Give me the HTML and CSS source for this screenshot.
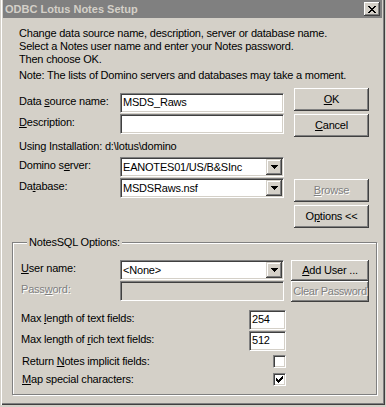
FILE: index.html
```html
<!DOCTYPE html>
<html>
<head>
<meta charset="utf-8">
<title>ODBC Lotus Notes Setup</title>
<link rel="stylesheet" href="styles.css">
</head>
<body>
<div class="window">
  <div class="titlebar">
    <span class="title">ODBC Lotus Notes Setup</span>
    <span class="close"><svg width="8" height="7" viewBox="0 0 8 7" shape-rendering="crispEdges"><path d="M0 0h2v1H0zM6 0h2v1H6zM1 1h2v1H1zM5 1h2v1H5zM2 2h4v1H2zM3 3h2v1H3zM2 4h4v1H2zM1 5h2v1H1zM5 5h2v1H5zM0 6h2v1H0zM6 6h2v1H6z" fill="#000"/></svg></span>
  </div>
  <div class="client">
    <div class="intro">
      <p>Change data source name, description, server or database name.<br>Select a Notes user name and enter your Notes password.<br>Then choose OK.</p>
      <p class="note">Note: The lists of Domino servers and databases may take a moment.</p>
    </div>
    <div class="main">
      <div class="fields">
        <div class="row"><span class="lbl">Data <u>s</u>ource name:</span><div class="edit">MSDS_Raws</div></div>
        <div class="row"><span class="lbl"><u>D</u>escription:</span><div class="edit"></div></div>
        <div class="install">Using Installation: d:\lotus\domino</div>
        <div class="row"><span class="lbl">Domino s<u>e</u>rver:</span><div class="combo"><span class="val">EANOTES01/US/B&amp;SInc</span><span class="drop"><svg width="7" height="4" viewBox="0 0 7 4" shape-rendering="crispEdges"><path d="M0 0h7v1H0zM1 1h5v1H1zM2 2h3v1H2zM3 3h1v1H3z" fill="#000"/></svg></span></div></div>
        <div class="row"><span class="lbl">Da<u>t</u>abase:</span><div class="combo"><span class="val">MSDSRaws.nsf</span><span class="drop"><svg width="7" height="4" viewBox="0 0 7 4" shape-rendering="crispEdges"><path d="M0 0h7v1H0zM1 1h5v1H1zM2 2h3v1H2zM3 3h1v1H3z" fill="#000"/></svg></span></div></div>
      </div>
      <div class="buttons">
        <div class="btn"><span><u>O</u>K</span></div>
        <div class="btn"><span><u>C</u>ancel</span></div>
        <div class="btn disabled gap"><span><u>B</u>rowse</span></div>
        <div class="btn"><span>O<u>p</u>tions &lt;&lt;</span></div>
      </div>
    </div>
    <fieldset class="group">
      <legend>NotesSQL Options:</legend>
      <div class="grow user">
        <span class="lbl"><u>U</u>ser name:</span>
        <div class="combo"><span class="val">&lt;None&gt;</span><span class="drop"><svg width="7" height="4" viewBox="0 0 7 4" shape-rendering="crispEdges"><path d="M0 0h7v1H0zM1 1h5v1H1zM2 2h3v1H2zM3 3h1v1H3z" fill="#000"/></svg></span></div>
        <div class="btn sm"><span><u>A</u>dd User ...</span></div>
      </div>
      <div class="grow pass">
        <span class="lbl disabled">Pass<u>w</u>ord:</span>
        <div class="edit ro"></div>
        <div class="btn sm disabled tight"><span>Clear Password</span></div>
      </div>
      <div class="nrow first">
        <span class="lbl">Max <u>l</u>ength of text fields:</span>
        <div class="edit num">254</div>
      </div>
      <div class="nrow">
        <span class="lbl">Max length of <u>r</u>ich text fields:</span>
        <div class="edit num">512</div>
      </div>
      <div class="crow c1">
        <span class="lbl">Return <u>N</u>otes implicit fields:</span>
        <span class="check"></span>
      </div>
      <div class="crow c2">
        <span class="lbl"><u>M</u>ap special characters:</span>
        <span class="check"><svg width="7" height="7" viewBox="0 0 7 7" shape-rendering="crispEdges"><path d="M6 0h1v1H6zM5 1h2v1H5zM0 2h1v1H0zM4 2h3v1H4zM0 3h2v1H0zM3 3h3v1H3zM0 4h5v1H0zM1 5h3v1H1zM2 6h1v1H2z" fill="#000"/></svg></span>
      </div>
    </fieldset>
  </div>
</div>
</body>
</html>
```

FILE: styles.css
```css
* { box-sizing: border-box; }
html, body { margin: 0; padding: 0; background: #d4d0c8; }
body {
  font-family: "Liberation Sans", Arial, sans-serif;
  font-size: 11px;
  line-height: 13px;
  letter-spacing: -0.2px;
  color: #000;
}
u { text-decoration: underline; text-underline-offset: 1px; }

.window {
  width: 385px;
  height: 405px;
  padding: 0 3px;
  background: #d4d0c8;
  box-shadow: inset 1px 0 0 #d4d0c8, inset 2px 0 0 #fff, inset -1px -1px 0 #404040, inset -2px -2px 0 #808080;
}
.titlebar {
  height: 18px;
  margin-bottom: 1px;
  background: #808080;
  display: flex;
  align-items: center;
  justify-content: space-between;
  padding: 0 2px;
}
.title { color: #d4d0c8; font-weight: bold; letter-spacing: 0; }
.close {
  width: 16px;
  height: 14px;
  display: flex;
  align-items: center;
  justify-content: center;
  background: #d4d0c8;
  box-shadow: inset -1px -1px 0 #404040, inset 1px 1px 0 #fff, inset -2px -2px 0 #808080;
}
.close svg, .drop svg, .check svg { display: block; }

.client { padding: 8px 5px 0 9px; }
.intro, .main { padding-left: 7px; }
.intro p { margin: 0; white-space: nowrap; }
.intro .note { margin-top: 3px; }

.main { display: flex; align-items: flex-start; margin-top: 6px; }
.fields { width: 265px; padding-top: 5px; }
.row { display: grid; grid-template-columns: 101px 164px; height: 20px; margin-bottom: 1px; }
.lbl { padding-top: 2px; white-space: nowrap; }
.install { margin: 6px 0 4px; }

.buttons { margin-left: 10px; width: 75px; display: flex; flex-direction: column; gap: 3px; }
.btn {
  height: 23px;
  display: flex;
  align-items: center;
  justify-content: center;
  background: #d4d0c8;
  box-shadow: inset -1px -1px 0 #404040, inset 1px 1px 0 #fff, inset -2px -2px 0 #808080;
  white-space: nowrap;
}
.buttons .gap { margin-top: 39px; }
.disabled { color: #808080; text-shadow: 1px 1px 0 #fff; }
.tight { letter-spacing: -0.3px; }

.edit, .combo {
  height: 20px;
  background: #fff;
  border: 1px solid;
  border-color: #808080 #fff #fff #808080;
  box-shadow: inset 1px 1px 0 #404040, inset -1px -1px 0 #d4d0c8;
}
.edit { padding: 0 2px; line-height: 17px; white-space: nowrap; }
.edit.ro { background: #d4d0c8; }
.combo { display: flex; padding: 1px; }
.combo .val { flex: 1; padding-left: 1px; line-height: 16px; white-space: nowrap; overflow: hidden; }
.drop {
  width: 16px;
  height: 16px;
  display: flex;
  align-items: center;
  justify-content: center;
  background: #d4d0c8;
  box-shadow: inset -1px -1px 0 #404040, inset 1px 1px 0 #d4d0c8, inset -2px -2px 0 #808080, inset 2px 2px 0 #fff;
}

.group {
  margin: 8px 0 0;
  padding: 0 5px 8px 8px;
  border: 1px solid #808080;
  box-shadow: 1px 1px 0 #fff, inset 1px 1px 0 #fff;
  min-width: 0;
}
.group legend { margin-left: 6px; padding: 0 2px; background: #d4d0c8; }

.grow { display: flex; align-items: flex-start; height: 21px; }
.grow .lbl { width: 99px; }
.grow .combo, .grow .edit { width: 164px; }
.grow .btn.sm { width: 78px; height: 21px; margin-left: 7px; }
.user { margin-top: 11px; }

.nrow, .crow { display: flex; align-items: flex-start; width: 265px; }
.nrow { height: 20px; margin-top: 1px; }
.nrow.first { margin-top: 8px; }
.nrow .edit.num { width: 37px; margin-left: auto; }
.crow { height: 13px; }
.crow .lbl { padding-top: 0; padding-left: 1px; }
.c1 { margin-top: 4px; }
.c2 { margin-top: 5px; }
.check {
  width: 13px;
  height: 13px;
  margin-left: auto;
  background: #fff;
  border: 1px solid;
  border-color: #808080 #fff #fff #808080;
  box-shadow: inset 1px 1px 0 #404040, inset -1px -1px 0 #d4d0c8;
  display: flex;
  align-items: center;
  justify-content: center;
}
```
